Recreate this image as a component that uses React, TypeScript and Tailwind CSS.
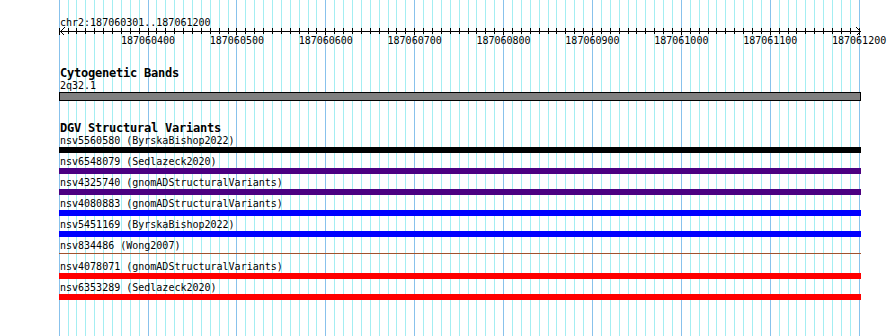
import React from "react";

const START = 187060301;
const END = 187061200;
const LEFT = 60;
const WIDTH = 800;

// base pair -> pixel column (800px for 900bp)
const toX = (bp: number) => LEFT + ((bp - START) * WIDTH) / (END - START + 1);
const px = (bp: number) => Math.floor(toX(bp)) + 0.5;

const gridStops: number[] = [];
for (let p = 187060300; p <= END; p += 10) gridStops.push(p);
const majorStops = gridStops.filter((p) => p % 100 === 0);

const variants = [
  { id: "nsv5560580", study: "ByrskaBishop2022", color: "bg-black" },
  { id: "nsv6548079", study: "Sedlazeck2020", color: "bg-[#4b0082]" },
  { id: "nsv4325740", study: "gnomADStructuralVariants", color: "bg-[#4b0082]" },
  { id: "nsv4080883", study: "gnomADStructuralVariants", color: "bg-[#0000ff]" },
  { id: "nsv5451169", study: "ByrskaBishop2022", color: "bg-[#0000ff]" },
  { id: "nsv834486", study: "Wong2007", color: "thin" },
  { id: "nsv4078071", study: "gnomADStructuralVariants", color: "bg-[#ff0000]" },
  { id: "nsv6353289", study: "Sedlazeck2020", color: "bg-[#ff0000]" },
];

function Grid() {
  return (
    <svg className="absolute inset-0" width={890} height={336} shapeRendering="crispEdges">
      {gridStops.map((p) => (
        <line
          key={p}
          x1={px(p)}
          x2={px(p)}
          y1={0}
          y2={336}
          stroke={p % 100 === 0 ? "#88c2ec" : "#a4eef2"}
          strokeWidth={1}
        />
      ))}
    </svg>
  );
}

function Ruler() {
  return (
    <svg className="block" width={890} height={56} shapeRendering="crispEdges">
      <text x={LEFT} y={26} fontFamily="DejaVu Sans Mono, monospace" fontSize={10} fill="#000">
        chr2:187060301..187061200
      </text>
      <line x1={LEFT} x2={LEFT + WIDTH} y1={31.5} y2={31.5} stroke="#000" />
      {gridStops.map((p) => (
        <line key={p} x1={px(p)} x2={px(p)} y1={28} y2={p % 100 === 0 ? 35 : 34} stroke="#000" />
      ))}
      <polyline points="64.5,27.5 60.5,31.5 64.5,35.5" fill="none" stroke="#000" />
      <polyline points="856.5,27.5 860.5,31.5 856.5,35.5" fill="none" stroke="#000" />
      {majorStops
        .filter((p) => p > START)
        .map((p) => (
          <text
            key={p}
            x={toX(p)}
            y={44}
            textAnchor="middle"
            fontFamily="DejaVu Sans Mono, monospace"
            fontSize={10}
            fill="#000"
          >
            {p}
          </text>
        ))}
    </svg>
  );
}

export default function App() {
  return (
    <div className="relative w-[890px] h-[336px] overflow-hidden bg-white font-['DejaVu_Sans_Mono',monospace] text-black">
      <Grid />
      <div className="relative flex flex-col">
        <Ruler />

        <div className="mt-[11px] pl-[60px] flex flex-col">
          <div className="h-[13px] text-[12px] leading-[12px] font-bold tracking-[-0.22px] whitespace-nowrap">
            Cytogenetic Bands
          </div>
          <div className="h-[12px] text-[10px] leading-[12px] whitespace-nowrap">2q32.1</div>
          <div className="ml-[-1px] w-[802px] h-[9px] border border-black bg-[#808080]" />
        </div>

        <div className="mt-[21px] pl-[60px] flex flex-col">
          <div className="h-[12px] text-[12px] leading-[12px] font-bold tracking-[-0.22px] whitespace-nowrap">
            DGV Structural Variants
          </div>
          {variants.map((v, i) => (
            <div key={v.id} className={`${i === 0 ? "pt-[1px]" : "pt-[3px]"} flex flex-col`}>
              <div className="h-[12px] text-[10px] leading-[12px] whitespace-nowrap">
                {v.id} ({v.study})
              </div>
              {v.color === "thin" ? (
                <div className="ml-[-1px] w-[802px] h-[6px] pt-px">
                  <div className="h-px bg-[#a0522d]" />
                </div>
              ) : (
                <div className={`ml-[-1px] w-[802px] h-[6px] ${v.color}`} />
              )}
            </div>
          ))}
        </div>
      </div>
    </div>
  );
}
